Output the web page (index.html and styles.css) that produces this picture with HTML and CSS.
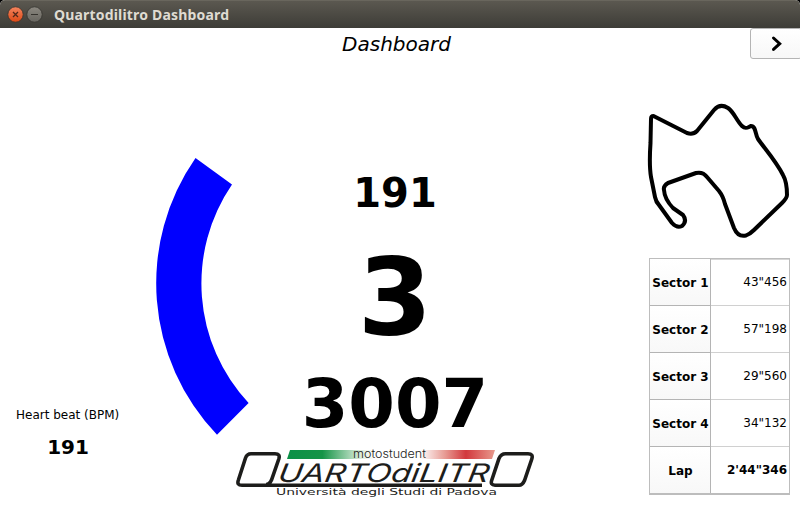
FILE: index.html
```html
<!DOCTYPE html>
<html lang="en">
<head>
<meta charset="utf-8">
<title>Quartodilitro Dashboard</title>
<link rel="stylesheet" href="styles.css">
</head>
<body>
<div class="window">
  <header class="titlebar">
    <svg class="controls" width="40" height="20" viewBox="0 0 40 20">
      <defs>
        <linearGradient id="close" x1="0" y1="0" x2="0" y2="1"><stop offset="0" stop-color="#f4855f"/><stop offset="1" stop-color="#dd4814"/></linearGradient>
        <linearGradient id="min" x1="0" y1="0" x2="0" y2="1"><stop offset="0" stop-color="#8b8880"/><stop offset="1" stop-color="#67655f"/></linearGradient>
      </defs>
      <circle cx="9.5" cy="10.5" r="7.7" fill="url(#close)" stroke="#35332e" stroke-width=".8"/>
      <path d="M7 8l5 5M12 8l-5 5" stroke="#51281a" stroke-width="1.3"/>
      <circle cx="28.5" cy="10.5" r="7.7" fill="url(#min)" stroke="#35332e" stroke-width=".8"/>
      <path d="M25 10.5h7" stroke="#35332e" stroke-width="1.2"/>
    </svg>
    <span class="window-title">Quartodilitro Dashboard</span>
  </header>
  <div class="toolbar">
    <h1>Dashboard</h1>
    <button class="next" aria-label="Next"><svg width="12" height="18" viewBox="0 0 12 18"><path d="M2.5 3L8.700 8.700L2.5 14.400" fill="none" stroke="#000" stroke-width="3" stroke-linecap="round"/></svg></button>
  </div>
  <main>
    <section class="heart">
      <div class="heart-label">Heart beat (BPM)</div>
      <div class="heart-value">191</div>
    </section>
    <section class="center">
      <div class="gauge">
        <svg class="arc" width="96" height="280" viewBox="155 157 96 280"><path d="M195.5 158A219.3 219.3 0 0 0 217 434.8L248.6 403A175 175 0 0 1 232 184.6Z" fill="#00f"/></svg>
        <div class="readout">
          <div class="speed">191</div>
          <div class="gear">3</div>
          <div class="rpm">3007</div>
        </div>
      </div>
      <svg class="logo" width="300" height="52" viewBox="235 447 300 52">
        <defs><linearGradient id="flag"><stop offset="0" stop-color="#0b9047"/><stop offset=".17" stop-color="#159447"/><stop offset=".35" stop-color="#d8ebd9"/><stop offset=".42" stop-color="#fff"/><stop offset=".64" stop-color="#fff"/><stop offset=".76" stop-color="#e79a93"/><stop offset=".86" stop-color="#d2383d"/><stop offset="1" stop-color="#e89a8d"/></linearGradient></defs>
        <path d="M290 450H495L492 459H287Z" fill="url(#flag)"/>
        <g fill="none" stroke="#1d1d1b">
          <path d="M482 485.300H242Q236.500 485.300 238.400 480L245.500 458Q247 453.700 251 453.700H275Q280.500 453.700 278.800 459L271.500 480Q269.500 484.500 266 484.500" stroke-width="3.600"/>
          <path d="M505.500 453.700H528Q533.500 453.700 531.800 459L524.500 480.500Q522.500 485.200 519 485.200H495Q490 485.200 491.800 480L499 458.500Q501 453.700 505.500 453.700Z" stroke-width="3.600"/>
        </g>
        <text class="motto" x="353" y="458.300" textLength="73" lengthAdjust="spacingAndGlyphs">motostudent</text>
        <text class="wordmark" transform="translate(277 481.700) skewX(-10)" textLength="211" lengthAdjust="spacingAndGlyphs">UARTOdiLITR</text>
        <text class="school" x="276" y="495.200" textLength="221" lengthAdjust="spacingAndGlyphs">Università degli Studi di Padova</text>
      </svg>
    </section>
    <aside>
      <svg class="track" width="144" height="138" viewBox="646 102 144 138"><path d="M653.500 116Q651 116 651 119L650.500 143Q649 165 651 177L655 197Q656 202 659 205L672 223Q677 228.500 682 226Q687.500 221 683 215L673 208Q664.500 199 664 190Q663 186 668 183L696 173Q703 171.500 707 177L719 191Q723 196 725 204L734 228Q738 237.500 746 235.500Q750 234 754 230L782 203Q787 198 787 195Q787 182 783 175C776 161 765 149 758 139C755 134 756 126 751 126C748 127 746 130 742 126C736 120 734 112 728 108Q720 103 714 110L697 131Q693 135 687 133Z" fill="none" stroke="#000" stroke-width="4" stroke-linejoin="round"/></svg>
      <table>
        <tr><th>Sector 1</th><td>43"456</td></tr>
        <tr><th>Sector 2</th><td>57"198</td></tr>
        <tr><th>Sector 3</th><td>29"560</td></tr>
        <tr><th>Sector 4</th><td>34"132</td></tr>
        <tr class="lap"><th>Lap</th><td>2'44"346</td></tr>
      </table>
    </aside>
  </main>
</div>
</body>
</html>
```
FILE: styles.css
```css
* { box-sizing: border-box; }
body { margin: 0; background: #000; color: #000; font: 12px "DejaVu Sans", sans-serif; }
.window { width: 800px; height: 508px; overflow: hidden; background: #fff; border-radius: 5px 5px 0 0; display: flex; flex-direction: column; }
.titlebar { height: 28px; flex: none; display: flex; align-items: center; padding-left: 6px; background: linear-gradient(#5b5850, #3d3c37); border-top: 1px solid #69665d; }
.controls { margin-top: -1px; }
.window-title { margin-left: 8px; color: #dfdbd2; font: bold 14px "Noto Sans", sans-serif; letter-spacing: .18px; white-space: nowrap; }
.toolbar { height: 32px; flex: none; display: grid; grid-template-columns: 1fr 50px; align-items: start; }
h1 { margin: 0 0 0 43px; text-align: center; font-size: 20px; font-style: italic; font-weight: 400; line-height: 32px; }
.next { width: 52px; height: 31px; padding: 0 0 0 2px; border: 1px solid #b4b4b4; border-radius: 3px; background: linear-gradient(#fff, #f7f7f7); display: flex; align-items: center; justify-content: center; }
main { flex: 1; display: grid; grid-template-columns: 155px 1fr 154px; }
.heart { padding: 347px 0 0 16px; white-space: nowrap; }
.heart-label { line-height: 16px; }
.heart-value { width: 104px; margin-top: 11px; text-align: center; font-size: 20px; font-weight: bold; line-height: 26px; }
.center { padding-top: 97px; }
.gauge { height: 280px; display: flex; }
.readout { margin-left: 44px; width: 200px; text-align: center; font-weight: bold; }
.speed { font-size: 40px; line-height: 48px; margin-top: 12px; }
.gear { font-size: 107px; line-height: 126px; margin-top: 17px; }
.rpm { font-size: 67px; line-height: 80px; margin-top: 4px; }
.logo { display: block; margin: 10px 0 0 80px; }
.logo text { fill: #1d1d1b; }
.motto { font: 300 11px Inter, sans-serif; }
.wordmark { font: italic 400 25.5px Inter, sans-serif; }
.school { font: 8px "DejaVu Sans", sans-serif; }
aside { padding-top: 42px; }
.track { display: block; }
table { width: 141px; margin: 18px 0 0 3px; border-collapse: separate; border-spacing: 0; border: 1px solid #bdbdbd; border-bottom-width: 2px; table-layout: fixed; }
th, td { height: 47px; padding: 0; border-bottom: 1px solid #d0d0d0; }
th { width: 61px; border-right: 1px solid #b4b4b4; border-bottom-color: #b4b4b4; background: linear-gradient(#fff, #f8f8f8); text-align: center; white-space: nowrap; padding: 2px 0 0 1px; }
td { text-align: right; padding-right: 2px; }
tr:first-child td { border-top: 1px solid #d6d6d6; padding-bottom: 2px; }
tr:last-child th, tr:last-child td { border-bottom: 0; height: 46px; }
.lap td { font-weight: bold; }
```
